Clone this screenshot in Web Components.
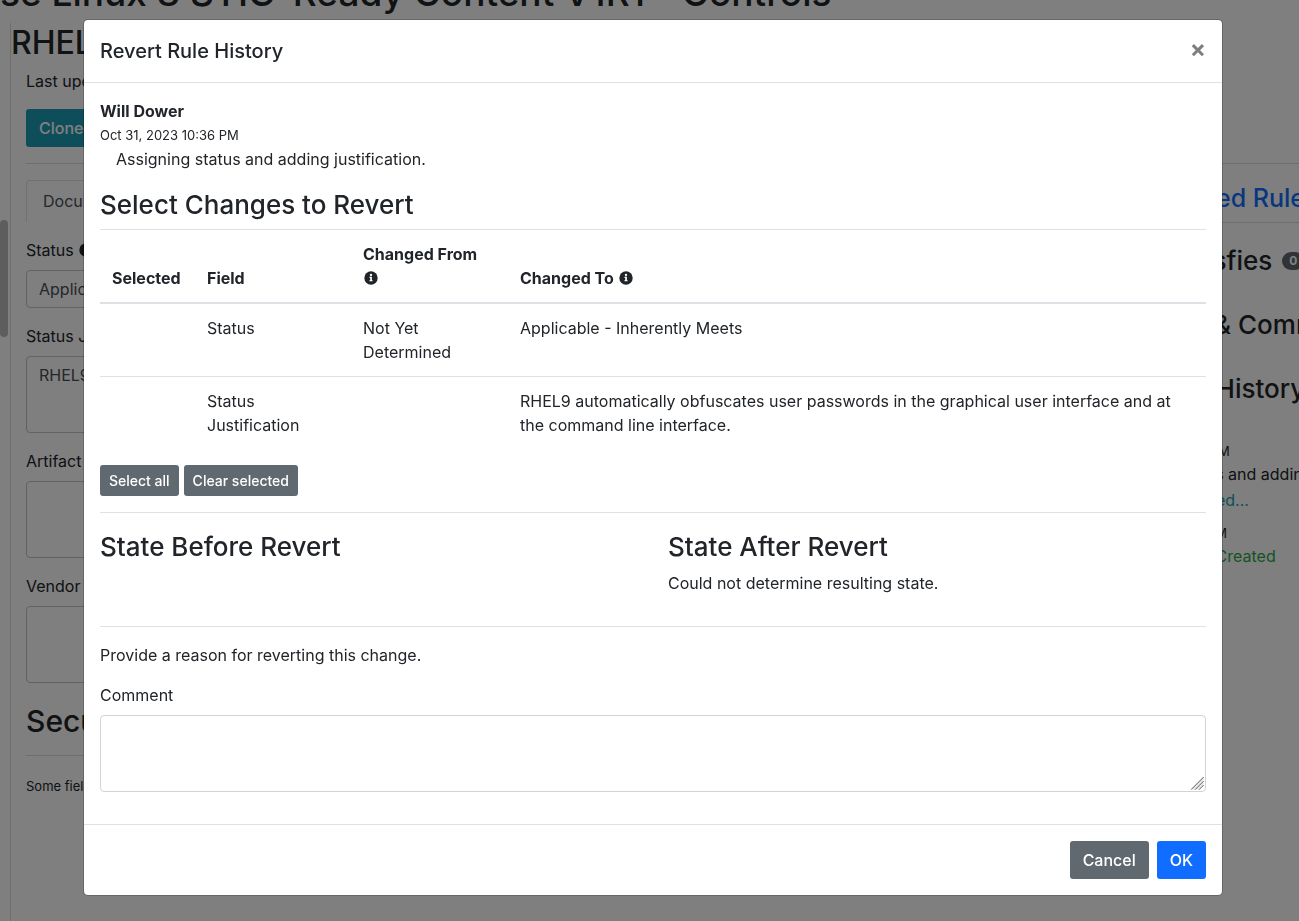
<!DOCTYPE html>
<html lang="en">
<head>
<meta charset="utf-8">
<meta name="viewport" content="width=device-width, initial-scale=1">
<title>Controls</title>
<style>
  body { margin: 0; font: 16px/24px Inter, "Liberation Sans", sans-serif; color: #212529; background: #fff; }
</style>
</head>
<body>
<app-page></app-page>
<app-modal heading="Revert Rule History">
  <revert-form></revert-form>
</app-modal>

<script>
const define = (name, html, setup) => {
  const template = document.createElement('template');
  template.innerHTML = `<style>*,::before,::after{box-sizing:border-box}h1,h2,h3,h5,p{margin:0}[hidden]{display:none}</style>${html}`;
  customElements.define(name, class extends HTMLElement {
    constructor() {
      super();
      this.attachShadow({ mode: 'open' }).append(template.content.cloneNode(true));
    }
    connectedCallback() { if (setup) setup(this, this.shadowRoot); }
  });
};

define('info-icon', `
<style>
  :host { display: inline-block; width: 14px; height: 14px; vertical-align: -1px; margin-left: 1px; }
  svg { display: block; }
</style>
<svg width="14" height="14" viewBox="0 0 14 14" aria-hidden="true">
  <circle cx="7" cy="7" r="6.7" fill="#212529"/>
  <circle cx="7" cy="4" r="1.15" fill="#fff"/>
  <path d="M5.5 5.8h2.4v3.4h.7v1.1H5.4V9.2h.8V6.9h-.7z" fill="#fff"/>
</svg>`);

define('ui-button', `
<style>
  :host { display: inline-block; }
  button { display: block; margin: 0; border: 1px solid transparent; border-radius: 3px; padding: 6px 12px;
    font: inherit; font-weight: 500; color: #fff; background: #616970; white-space: nowrap; }
  :host([size=sm]) button { padding: 4px 8px; font-size: 14px; line-height: 21px; }
  :host([kind=primary]) button { background: #116dff; }
  :host([kind=info]) button { background: #1d9db5; }
</style>
<button type="button"><slot></slot></button>`);

define('form-field', `
<style>
  :host { display: block; margin-bottom: 16px; }
  label { display: block; margin-bottom: 8px; white-space: nowrap; }
  .control { position: relative; }
  textarea, select { display: block; width: 100%; margin: 0; padding: 6px 12px; border: 1px solid #ced4da; border-radius: 4px;
    font: inherit; color: #495057; background: #fff; resize: none; outline: 0; }
  textarea { height: 77px; }
  select { height: 38px; appearance: none; }
  :host([muted]) textarea, :host([muted]) select { border-color: #c0c4c8; }
  .grip { position: absolute; right: 2px; bottom: 2px; pointer-events: none; }
</style>
<label for="control"><span></span> <info-icon hidden></info-icon></label>
<div class="control"></div>`, (host, root) => {
  root.querySelector('span').textContent = host.getAttribute('label');
  root.querySelector('info-icon').hidden = !host.hasAttribute('info');
  const value = host.getAttribute('value') || '';
  const box = root.querySelector('.control');
  if (host.hasAttribute('select')) {
    box.innerHTML = `<select id="control"><option>${value}</option></select>`;
  } else {
    box.innerHTML = `<textarea id="control">${value}</textarea>` +
      (host.hasAttribute('grip') ? '<svg class="grip" width="13" height="13" viewBox="0 0 13 13" aria-hidden="true"><path d="M0 12.7 12.7 0M4 12.7 12.7 4M8 12.7 12.7 8" stroke="#555" fill="none"/><path d="M2 12.5 12.5 2M6 12.5 12.5 6" stroke="#ccc" fill="none"/></svg>' : '');
  }
});

define('rule-panel', `
<style>
  :host { display: block; padding-right: 16px; }
  .tab { display: inline-block; padding: 8px 16px 9px; border: 1px solid #dee2e6; border-bottom: 0; border-radius: 4px 4px 0 0;
    color: #495057; text-decoration: none; margin-bottom: 16px; vertical-align: top; }
  h2 { font-size: 30px; line-height: 44px; font-weight: 500; padding-bottom: 12px; border-bottom: 1px solid #dcdcdc; }
  small { display: block; margin-top: 18px; font-size: 13px; }
</style>
<a class="tab" href="#documentation">Documentation</a>
<form-field muted select info label="Status" value="Applicable - Inherently Meets"></form-field>
<form-field muted label="Status Justification" value="RHEL9 automatically obfuscates user passwords"></form-field>
<form-field muted label="Artifact"></form-field>
<form-field muted label="Vendor"></form-field>
<h2>Security</h2>
<small>Some fields</small>`);

define('side-panel', `
<style>
  :host { display: block; min-width: 0; overflow: hidden; white-space: nowrap; }
  a { color: #116dff; text-decoration: none; }
  h3 { font-size: 26px; line-height: 36px; font-weight: 500; }
  .related { height: 43px; font-size: 25px; border-bottom: 1px solid #dcdcdc; }
  .sections { display: grid; gap: 28px; padding: 20px 0 0 13px; }
  .sections h3 { display: flex; align-items: center; gap: 10px; }
  .badge { padding: 0 7px; border-radius: 10px; font-size: 12px; line-height: 18px; font-weight: 700; color: #fff; background: #616970; }
  .log { padding-top: 33px; }
  time { display: block; font-size: 13px; line-height: 22px; }
  p { padding-left: 8px; }
  .more { display: block; padding-left: 12px; color: #1d9db5; margin: 2px 0 10px; }
  .created { padding-left: 28px; color: #28a745; }
</style>
<h3 class="related"><a href="#related">View Related Rules</a></h3>
<div class="sections">
  <h3>Also Satisfies <span class="badge">0</span></h3>
  <h3>Reviews &amp; Comments</h3>
  <h3>Revision History</h3>
</div>
<div class="log">
  <time>Oct 31, 2023 10:36 PM</time>
  <p>Assigning status and adding justification.</p>
  <a class="more" href="#fields">2 Fields Changed...</a>
  <time>Oct 31, 2023 10:31 PM</time>
  <p class="created">Control Was Created</p>
</div>`);

define('app-page', `
<style>
  :host { display: flex; flex-direction: column; height: 100vh; overflow: hidden; }
  header { flex: none; height: 23px; display: flex; align-items: flex-end; white-space: nowrap; overflow: hidden; }
  h1 { font-size: 37px; line-height: 60px; font-weight: 500; }
  .columns { flex: 1; min-height: 0; display: grid; grid-template-columns: 11px 1fr; }
  .gutter { border-right: 1px solid #dcdcdc; }
  .thumb { width: 8px; height: 117px; margin-top: 197px; border-radius: 4px; background: #bbb; }
  main { min-width: 0; }
  h2 { font-size: 32px; line-height: 40px; font-weight: 500; }
  .intro { padding: 6px 0 16px 15px; }
  .intro p { margin-bottom: 16px; }
  .split { margin-left: 15px; padding-top: 16px; border-top: 1px solid #dcdcdc; display: grid; grid-template-columns: 1fr 208px; }
</style>
<header><h1>se Linux 8 STIG-Ready Content V1R1 - Controls</h1></header>
<div class="columns">
  <div class="gutter"><div class="thumb"></div></div>
  <main>
    <h2>RHEL</h2>
    <div class="intro">
      <p>Last updated</p>
      <ui-button kind="info">Clone</ui-button>
    </div>
    <div class="split"><rule-panel></rule-panel><side-panel></side-panel></div>
  </main>
</div>`);

define('app-modal', `
<style>
  :host { position: fixed; inset: 0; padding: 19px 76px 25px 83px; background: rgba(0,0,0,.5); overflow: auto; }
  section { background: #fff; background-clip: padding-box; border: 1px solid rgba(0,0,0,.2); border-radius: 5px; }
  header { display: flex; justify-content: space-between; align-items: flex-start; padding: 16px; border-bottom: 1px solid #dee2e6; }
  h5 { font-size: 20px; line-height: 30px; font-weight: 500; }
  .close { margin: 0; padding: 0; border: 0; background: none; font: inherit; font-size: 24px; line-height: 26px; font-weight: 700; color: #000; opacity: .5; }
  .body { padding: 16px; }
  footer { display: flex; justify-content: flex-end; gap: 8px; padding: 16px; border-top: 1px solid #dee2e6; }
</style>
<section role="dialog" aria-modal="true" aria-labelledby="title">
  <header><h5 id="title"></h5><button class="close" type="button" aria-label="Close">×</button></header>
  <div class="body"><slot></slot></div>
  <footer><ui-button>Cancel</ui-button><ui-button kind="primary">OK</ui-button></footer>
</section>`, (host, root) => {
  root.querySelector('h5').textContent = host.getAttribute('heading');
});

define('change-table', `
<style>
  :host { display: block; }
  table { width: 100%; border-collapse: separate; border-spacing: 0; table-layout: fixed; }
  th, td { padding: 12px; border-top: 1px solid #dee2e6; text-align: left; vertical-align: top; }
  th { vertical-align: bottom; border-bottom: 2px solid #dee2e6; font-weight: 700; }
  tbody tr:first-child td { border-top: 0; }
  .selected { width: 95px; }
  .field { width: 156px; }
  .from { width: 157px; }
</style>
<table>
  <colgroup><col class="selected"><col class="field"><col class="from"><col></colgroup>
  <thead><tr><th>Selected</th><th>Field</th><th>Changed From<br><info-icon></info-icon></th><th>Changed To <info-icon></info-icon></th></tr></thead>
  <tbody>
    <tr><td></td><td>Status</td><td>Not Yet Determined</td><td>Applicable - Inherently Meets</td></tr>
    <tr><td></td><td>Status Justification</td><td></td><td>RHEL9 automatically obfuscates user passwords in the graphical user interface and at the command line interface.</td></tr>
  </tbody>
</table>`);

define('revert-form', `
<style>
  :host { display: block; }
  strong, time { display: block; }
  strong { font-weight: 700; }
  time { font-size: 13px; }
  .note { padding-left: 16px; margin-bottom: 16px; }
  h3 { font-size: 26px; line-height: 36px; font-weight: 500; margin-bottom: 6px; }
  .actions { display: flex; gap: 5px; margin-top: 16px; }
  .rule { margin: 16px 0; border: 0; border-top: 1px solid #dee2e6; }
  .states { display: grid; grid-template-columns: 1fr 1fr; gap: 30px; min-height: 81px; }
  .reason { margin-bottom: 16px; }
</style>
<strong>Will Dower</strong>
<time>Oct 31, 2023 10:36 PM</time>
<p class="note">Assigning status and adding justification.</p>
<h3>Select Changes to Revert</h3>
<change-table></change-table>
<div class="actions"><ui-button size="sm">Select all</ui-button><ui-button size="sm">Clear selected</ui-button></div>
<hr class="rule">
<div class="states">
  <div><h3>State Before Revert</h3></div>
  <div><h3>State After Revert</h3><p>Could not determine resulting state.</p></div>
</div>
<hr class="rule">
<p class="reason">Provide a reason for reverting this change.</p>
<form-field grip label="Comment"></form-field>`);
</script>
</body>
</html>
